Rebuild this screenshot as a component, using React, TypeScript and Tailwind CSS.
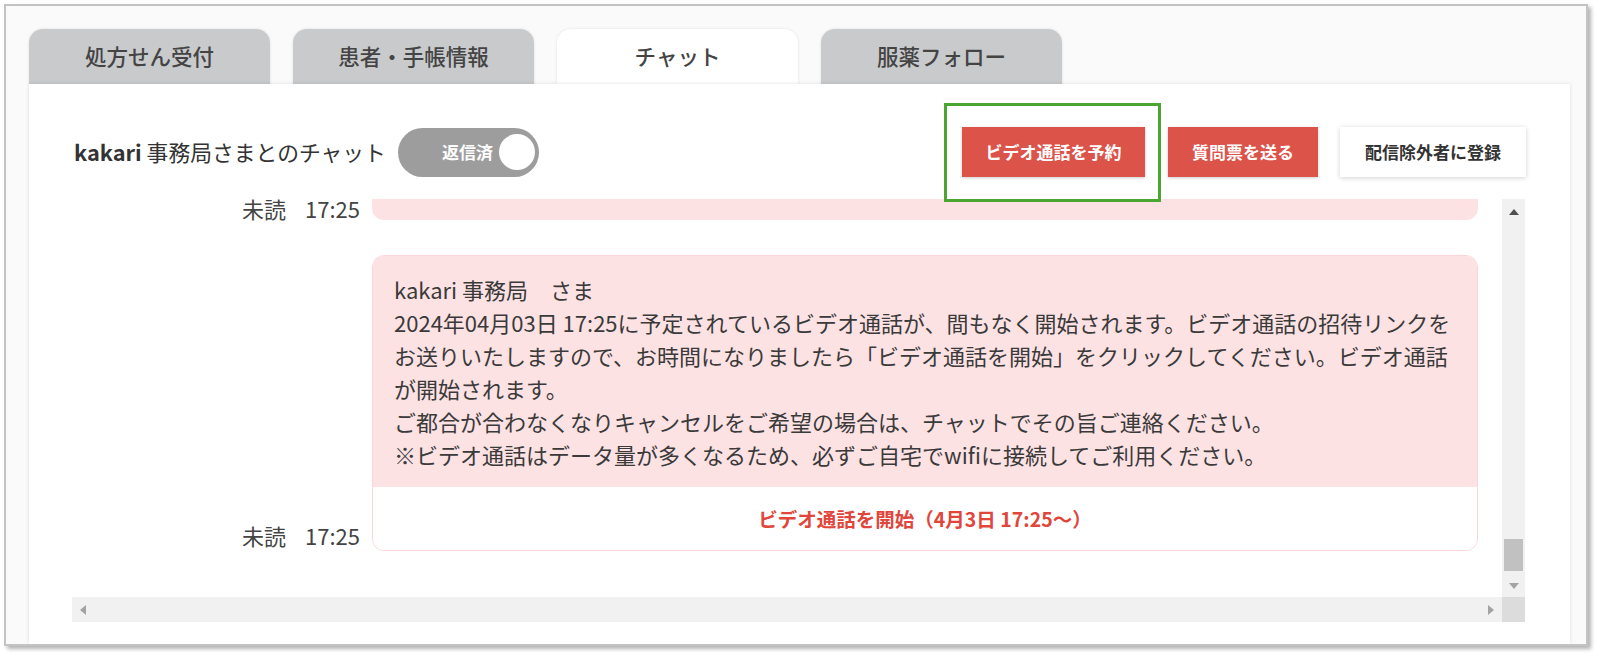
import React from "react";

const tabs = ["処方せん受付", "患者・手帳情報", "チャット", "服薬フォロー"];

const lines = [
  "kakari 事務局　さま",
  "2024年04月03日 17:25に予定されているビデオ通話が、間もなく開始されます。ビデオ通話の招待リンクを",
  "お送りいたしますので、お時間になりましたら「ビデオ通話を開始」をクリックしてください。ビデオ通話",
  "が開始されます。",
  "ご都合が合わなくなりキャンセルをご希望の場合は、チャットでその旨ご連絡ください。",
  "※ビデオ通話はデータ量が多くなるため、必ずご自宅でwifiに接続してご利用ください。",
];

function Arrow({ dir, color }: { dir: "up" | "down" | "left" | "right"; color: string }) {
  const pts = {
    up: "0,7 5,1 10,7",
    down: "0,1 5,7 10,1",
    left: "7,0 1,5 7,10",
    right: "1,0 7,5 1,10",
  }[dir];
  const vertical = dir === "up" || dir === "down";
  return (
    <svg width={vertical ? 10 : 8} height={vertical ? 8 : 10} viewBox={vertical ? "0 0 10 8" : "0 0 8 10"}>
      <polygon points={pts} fill={color} />
    </svg>
  );
}

function ReadMark({ className }: { className: string }) {
  return (
    <div className={"flex items-center gap-[19px] text-[22px] leading-[18px] text-[#444] whitespace-nowrap " + className}>
      <span>未読</span>
      <span>17:25</span>
    </div>
  );
}

export default function App() {
  return (
    <div
      className="w-[1600px] h-[659px] bg-white overflow-hidden pt-[4px] pl-[4px]"
      style={{ fontFamily: '"Noto Sans CJK JP", "Noto Sans", sans-serif' }}
    >
      <div className="w-[1584px] h-[642px] border-2 border-[#c3c3c3] bg-[#fafafa] shadow-[3px_3px_4px_rgba(0,0,0,0.3)] flex flex-col overflow-hidden">
        {/* tabs */}
        <div className="flex gap-[23px] pl-[23px] pt-[23px]">
          {tabs.map((t, i) => (
            <div
              key={t}
              className={
                "w-[241px] h-[55px] rounded-t-[14px] flex items-center justify-center text-[21.5px] font-medium text-[#444] shadow-[0_0_3px_rgba(0,0,0,0.1)] " +
                (i === 2 ? "bg-white" : "bg-[#c9cacc]")
              }
            >
              {t}
            </div>
          ))}
        </div>

        {/* panel */}
        <div className="ml-[23px] w-[1541px] flex-1 bg-white shadow-[0_0_4px_rgba(0,0,0,0.12)]">
          <div className="flex items-center justify-between pl-[45px] pr-[44px] pt-[43px]">
            <div className="flex items-center gap-[12px]">
              <div className="text-[21.8px] text-[#333] whitespace-nowrap">
                <span className="font-bold">kakari</span>
                <span> 事務局さまとのチャット</span>
              </div>
              <div className="w-[141px] h-[49px] rounded-full bg-[#9d9d9d] flex items-center justify-end pr-[4px] gap-[6px]">
                <span className="text-white font-bold text-[17px]">返信済</span>
                <span className="w-[36px] h-[36px] rounded-full bg-white" />
              </div>
            </div>
            <div className="flex items-center">
              <div className="relative">
                <div className="absolute -left-[18px] -right-[16px] -top-[24px] -bottom-[25px] border-[3px] border-[#4ca431] bg-white z-10" />
                <button className="relative z-20 w-[183px] h-[50px] bg-[#dc534a] text-white font-bold text-[17px] shadow-[0_1px_3px_rgba(0,0,0,0.2)]">
                  ビデオ通話を予約
                </button>
              </div>
              <button className="ml-[23px] w-[150px] h-[50px] bg-[#dc534a] text-white font-bold text-[17px] shadow-[0_1px_3px_rgba(0,0,0,0.2)]">
                質問票を送る
              </button>
              <button className="ml-[22px] w-[186px] h-[50px] bg-white text-[#333] font-bold text-[17px] shadow-[0_1px_5px_rgba(0,0,0,0.18)]">
                配信除外者に登録
              </button>
            </div>
          </div>

          {/* scroll area */}
          <div className="ml-[43px] mt-[22px] w-[1453px] h-[423px] grid grid-cols-[1430px_23px] grid-rows-[398px_25px]">
            <div className="flex flex-col pr-[24px]">
              <div className="h-[21px] flex justify-end items-end gap-[12px]">
                <ReadMark className="mb-[3px]" />
                <div className="w-[1106px] h-[21px] bg-[#fde2e4] rounded-b-[12px]" />
              </div>
              <div className="flex justify-end items-end gap-[12px] mt-[35px]">
                <ReadMark className="mb-[7px]" />
                <div className="w-[1106px] rounded-[12px] border border-[#fbd6d9] overflow-hidden">
                  <div className="bg-[#fde2e4] pt-[17px] pb-[16px] pl-[21px] text-[22px] leading-[33px] text-[#3a3a3a]">
                    {lines.map((l) => (
                      <div key={l} className="whitespace-nowrap">
                        {l}
                      </div>
                    ))}
                  </div>
                  <div className="bg-white h-[63px] flex items-center justify-center text-[19.5px] font-bold text-[#e0463c]">
                    ビデオ通話を開始（4月3日 17:25〜）
                  </div>
                </div>
              </div>
            </div>

            {/* vertical scrollbar */}
            <div className="bg-[#f1f1f1] flex flex-col items-center">
              <div className="h-[23px] flex items-center justify-center pt-[2px]">
                <Arrow dir="up" color="#505050" />
              </div>
              <div className="flex-1" />
              <div className="h-[32px] w-[19px] bg-[#c1c1c1] mb-[3px]" />
              <div className="h-[23px] flex items-center justify-center">
                <Arrow dir="down" color="#a3a3a3" />
              </div>
            </div>

            {/* horizontal scrollbar */}
            <div className="bg-[#f1f1f1] flex items-center justify-between px-[7px]">
              <Arrow dir="left" color="#a3a3a3" />
              <Arrow dir="right" color="#a3a3a3" />
            </div>
            <div className="bg-[#dcdcdc]" />
          </div>
        </div>
      </div>
    </div>
  );
}
